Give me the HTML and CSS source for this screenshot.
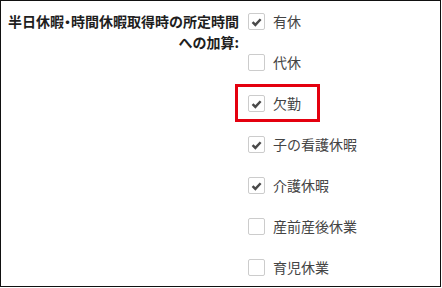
FILE: index.html
```html
<!DOCTYPE html>
<html lang="ja">
<head>
    <meta charset="UTF-8">
    <meta name="viewport" content="width=device-width, initial-scale=1.0">
    <title>所定時間への加算</title>
    <link rel="stylesheet" href="styles.css">
</head>
<body>
    <div class="frame">
        <div class="setting">
            <div class="setting-label">半日休暇<span class="dot">・</span>時間休暇取得時の所定時間<br>への加算:</div>
            <div class="options">
                <label class="option">
                    <span class="box checked"><svg viewBox="0 0 16 16"><path d="M3.8 8.6 L6.8 11.6 L12.4 5.6"/></svg></span>
                    <span class="option-text">有休</span>
                </label>
                <label class="option">
                    <span class="box"></span>
                    <span class="option-text">代休</span>
                </label>
                <label class="option highlight">
                    <span class="box checked"><svg viewBox="0 0 16 16"><path d="M3.8 8.6 L6.8 11.6 L12.4 5.6"/></svg></span>
                    <span class="option-text">欠勤</span>
                </label>
                <label class="option">
                    <span class="box checked"><svg viewBox="0 0 16 16"><path d="M3.8 8.6 L6.8 11.6 L12.4 5.6"/></svg></span>
                    <span class="option-text">子の看護休暇</span>
                </label>
                <label class="option">
                    <span class="box checked"><svg viewBox="0 0 16 16"><path d="M3.8 8.6 L6.8 11.6 L12.4 5.6"/></svg></span>
                    <span class="option-text">介護休暇</span>
                </label>
                <label class="option">
                    <span class="box"></span>
                    <span class="option-text">産前産後休業</span>
                </label>
                <label class="option">
                    <span class="box"></span>
                    <span class="option-text">育児休業</span>
                </label>
            </div>
        </div>
    </div>
</body>
</html>
```

FILE: styles.css
```css
body {
    margin: 0;
    padding: 0;
    background-color: #fff;
    font-family: "Noto Sans CJK JP", "Noto Sans", sans-serif;
}
.frame {
    box-sizing: border-box;
    width: 441px;
    height: 287px;
    border: 1px solid #111;
    overflow: hidden;
}
.setting {
    display: flex;
    gap: 9px;
    padding: 10px 0 0 0;
}
.setting-label {
    width: 238px;
    text-align: right;
    font-size: 14px;
    line-height: 21px;
    font-weight: bold;
    color: #1e1e1e;
    white-space: nowrap;
}
.dot {
    font-feature-settings: "palt";
}
.options {
    display: flex;
    flex-direction: column;
    align-items: flex-start;
    gap: 21px;
}
.option {
    position: relative;
    display: flex;
    align-items: center;
    gap: 8px;
    height: 20px;
}
.box {
    box-sizing: border-box;
    width: 17px;
    height: 17px;
    border: 1px solid #cccccc;
    border-radius: 2px;
    background-color: #fff;
}
.box svg {
    display: block;
    width: 15px;
    height: 15px;
    fill: none;
    stroke: #4a4a4a;
    stroke-width: 2.6;
}
.option-text {
    font-size: 14px;
    line-height: 20px;
    color: #444;
}
.highlight::after {
    content: "";
    position: absolute;
    left: -13px;
    right: -19px;
    top: -9px;
    bottom: -9px;
    border: 3px solid #e4000f;
}
```
